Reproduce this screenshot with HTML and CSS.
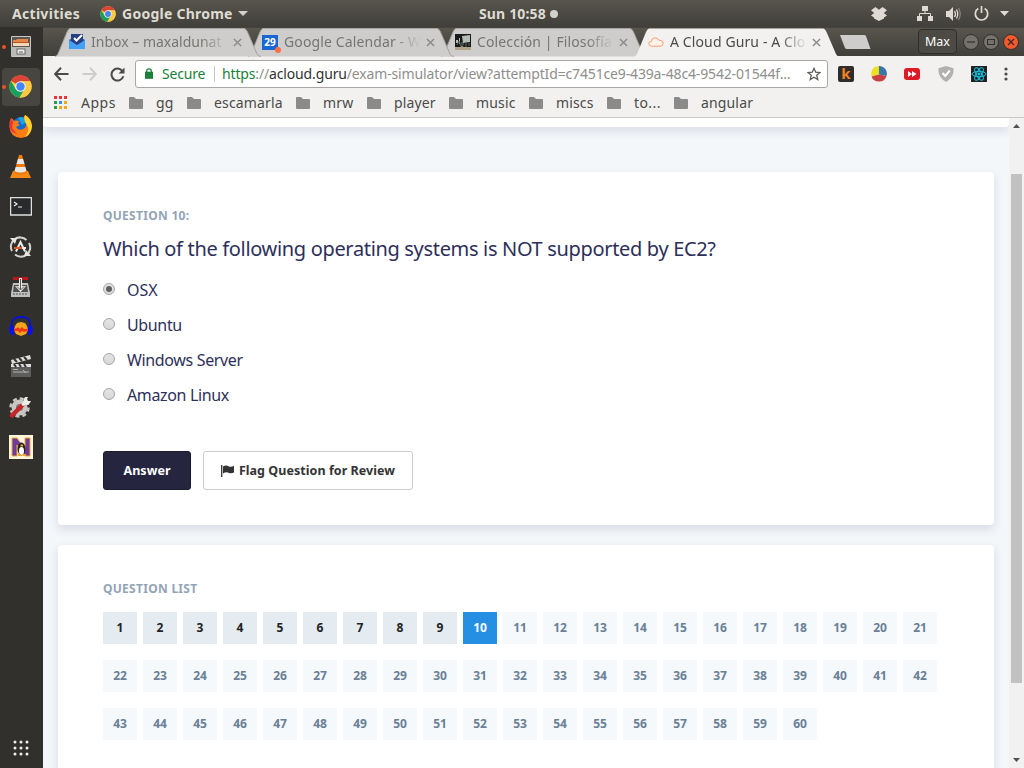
FILE: index.html
```html
<!DOCTYPE html>
<html lang="en">
<head>
<meta charset="utf-8">
<title>A Cloud Guru - Exam Simulator</title>
<link rel="stylesheet" href="styles.css">
</head>
<body>
<svg width="0" height="0" class="defs">
  <symbol id="chrome" viewBox="0 0 24 24">
    <circle cx="12" cy="12" r="11.5" fill="#fc4"/>
    <path d="M12 12 2 6A11.5 11.5 0 0 1 22.2 6.5H12Z" fill="#dc4437"/>
    <path d="M2 6.2A11.5 11.5 0 0 0 11 23.5L16.5 14.5 7 14.5Z" fill="#1a9f5b"/>
    <path d="M12 6.5H22.2A11.5 11.5 0 0 1 11 23.5L17 14Z" fill="#fdc943"/>
    <circle cx="12" cy="12" r="5.5" fill="#f3f3f3"/><circle cx="12" cy="12" r="4.4" fill="#4385f4"/>
  </symbol>
  <symbol id="folder" viewBox="0 0 14 12"><path d="M1 0H5L7 2H13Q14 2 14 3V11Q14 12 13 12H1Q0 12 0 11V1Q0 0 1 0Z" fill="#8a8a8a"/></symbol>
  <symbol id="close" viewBox="0 0 10 10"><path d="M1 1 9 9M9 1 1 9" stroke="#8b8987" stroke-width="1.5" fill="none"/></symbol>
  <symbol id="tab" viewBox="0 0 206 29"><path d="M0 28.5Q2 28 3 26L12 4Q13.500 .5 15 .5H189Q191 .5 192.500 4L202 26Q203 28 206 28.500" fill="#cfcdcb" stroke="#a5a3a0"/></symbol>
  <symbol id="tabOn" viewBox="0 0 206 29"><path d="M0 29Q2 28 3 26L12 4Q13.500 .5 15 .5H189Q191 .5 192.500 4L202 26Q203 28 205 29Z" fill="#f2f1f0"/></symbol>
</svg>

<header class="panel">
  <span class="activities">Activities</span>
  <svg class="app-logo" width="16" height="16"><use href="#chrome"/></svg>
  <span class="app-name">Google Chrome</span>
  <svg class="caret" width="10" height="5"><path d="M0 0H10L5 5Z" fill="#d3d1cb"/></svg>
  <span class="clock">Sun 10:58</span><i class="dot"></i>
  <div class="tray">
    <svg width="16" height="14" viewBox="0 0 16 14"><path d="M4.500 0 8 2.700 11.500 0 16 3.200 12.800 6 16 8.500 13 10.500V11.500L8 14 3 11.500V10.500L0 8.500 3.200 6 0 3.200Z" fill="#dfdbd2"/></svg>
    <svg class="net" width="16" height="15" viewBox="0 0 16 15"><path d="M5 0H11V5H5ZM0 10H5V15H0ZM11 10H16V15H11Z" fill="#dfdbd2"/><path d="M8 5V7.500M2.500 10V7.500H13.500V10" stroke="#dfdbd2" fill="none"/></svg>
    <svg class="vol" width="15" height="14" viewBox="0 0 15 14"><path d="M0 4H3L7 0V14L3 10H0Z" fill="#dfdbd2"/><path d="M8.500 4Q10.500 7 8.500 10M10.500 2.500Q13 7 10.500 11.500" stroke="#dfdbd2" stroke-width="1.300" fill="none"/><path d="M12.500 1Q16 7 12.500 13" stroke="#96948e" fill="none"/></svg>
    <svg class="power" width="15" height="15" viewBox="0 0 15 15"><path d="M4.300 2.500A6.200 6.200 0 1 0 10.700 2.500M7.500 0V7" stroke="#dfdbd2" stroke-width="1.700" fill="none"/></svg>
    <svg class="caret-end" width="9" height="5"><path d="M0 0H9L4.500 5Z" fill="#dfdbd2"/></svg>
  </div>
</header>

<div class="desktop">
  <nav class="dock">
    <span class="launcher running"><svg width="20" height="22" viewBox="0 0 20 22"><rect width="20" height="21" rx="1" fill="#c9c8c5"/><rect x="1" y="1" width="18" height="10" fill="#5a5752"/><path d="M2 4H5L6 3H17V6H2Z" fill="#e3874a"/><path d="M2 7H18V10H2Z" fill="#f3d7b8"/><path d="M2 6H18V7H2Z" fill="#b9521c"/><path d="M0 11H20V20H0Z" fill="#b9b9b7"/><rect x="6" y="13" width="8" height="5" fill="#eee" stroke="#666"/><path d="M8 16H12" stroke="#555"/></svg></span>
    <span class="launcher running current"><svg width="23" height="23"><use href="#chrome"/></svg></span>
    <span class="launcher"><svg width="23" height="23" viewBox="0 0 23 23"><circle cx="12" cy="11" r="9" fill="#126bd0"/><path d="M9 3Q13 1 15 3L17 7 13 10Z" fill="#18a5e8"/><path d="M2 3Q4 4 5 6Q7 5 10 6L9 9 11 10 7 12Q9 16 14 14Q18 13 17 8L15 3Q14 2 16 0Q23 4 23 12Q22 22 12 23Q1 22 .5 12Q0 7 2 3Z" fill="#ff7b16"/><path d="M16 0Q22 3 23 11Q22 20 16 22Q21 15 18 10Q14 5 16 0Z" fill="#ffd22f"/><path d="M2 3 4 7 3 13 8 19Q1 17 .5 11Z" fill="#f22d42"/></svg></span>
    <span class="launcher"><svg width="21" height="23" viewBox="0 0 21 23"><path d="M3 16H18L21 23H0Z" fill="#f58a16"/><path d="M9 0H12L17 18Q10.500 22 4 18Z" fill="#f17b0d"/><path d="M8 4H13L14.500 9H6.500ZM5.800 12H15.300L16.500 16Q10 19 4.500 16Z" fill="#e8e8e8"/></svg></span>
    <span class="launcher"><svg width="22" height="19" viewBox="0 0 22 19"><rect x=".5" y=".5" width="21" height="17.500" fill="#282a2b" stroke="#e0e0df" stroke-width="1.500"/><path d="M4 5 7 7 4 9M8 10H12" stroke="#eee" stroke-width="1.200" fill="none"/></svg></span>
    <span class="launcher"><svg width="23" height="22" viewBox="0 0 23 22"><g fill="none" stroke="#d4d3d0" stroke-width="2"><path d="M3 15A9.200 9.200 0 0 1 17.500 4M20 7A9.200 9.200 0 0 1 6 18.500"/></g><path d="M1 2 8 2 6 8ZM22 20H15L17 14Z" fill="#e5e4e1"/><path d="M7 15.500 11.500 6 16 15.500" stroke="#eee" stroke-width="2" fill="none"/><path d="M5 12H13" stroke="#e95420" stroke-width="2"/><path d="M13 12H17" stroke="#eee" stroke-width="2"/></svg></span>
    <span class="launcher"><svg width="21" height="22" viewBox="0 0 21 22"><path d="M3 7H18L20 17V21H1V17Z" fill="#bfc0bd"/><path d="M4 9H17L18 16H3Z" fill="#4f5151"/><path d="M3 1H18V4H3Z" fill="#b91722"/><path d="M9 2H12V10H16L10.500 16 5 10H9Z" fill="#eee"/><path d="M10.500 3V13M7 10.500 10.500 14 14 10.500" stroke="#555" fill="none"/><path d="M3 18H18" stroke="#555" stroke-dasharray="2 1"/></svg></span>
    <span class="launcher"><svg width="24" height="21" viewBox="0 0 24 21"><path d="M6 10 8 7 12 6 16 7 18 10 19 14 17 18 12 20 7 18 5 14Z" fill="#f0a51d"/><path d="M5 13 8 12 9 11 11 13 13 11 15 13H19V15L15 16 13 15 11 17 9 15H5Z" fill="#f43713"/><path d="M3 12Q1 1 12 1T21 12" stroke="#0712d8" stroke-width="1.800" fill="none"/><path d="M1 10Q4 8 5 11V19Q1 20 0 14ZM23 10Q20 8 19 11V19Q23 20 24 14Z" fill="#0712e8"/></svg></span>
    <span class="launcher"><svg width="22" height="23" viewBox="0 0 22 23"><path d="M1 5 20 0 21 4 2 9Z" fill="#dededb"/><path d="M4 4 7 7M9 3 12 6M14 2 17 5" stroke="#333" stroke-width="2"/><path d="M1 10H21V22H1Z" fill="#5d5e5c"/><path d="M1 9H21V12H1Z" fill="#ddd"/><path d="M4 9 6 12M9 9 11 12M14 9 16 12" stroke="#333" stroke-width="2"/><path d="M3 14.500H8M3 17H19M13 15 16 18" stroke="#c8c8c5" stroke-width=".8"/></svg></span>
    <span class="launcher"><svg width="23" height="22" viewBox="0 0 23 22"><circle cx="10.500" cy="11.500" r="8" fill="#c8c7c4"/><circle cx="10.500" cy="11.500" r="9" fill="none" stroke="#c8c7c4" stroke-width="2.500" stroke-dasharray="4 3.070"/><circle cx="10.500" cy="11.500" r="3.500" fill="#777"/><path d="M3 19.500 13 9.500" stroke="#c4262a" stroke-width="4.500" stroke-linecap="round"/><path d="M13 9 18 5" stroke="#eee" stroke-width="3"/><path d="M16 1Q13 5 16 8T22 5L19 5 18 3 19 1" fill="#ececea"/></svg></span>
    <span class="launcher"><svg width="24" height="24" viewBox="0 0 24 24"><path d="M0 0H24V24H0Z" fill="#fff4dc"/><path d="M3 3H8L16 14V3H21V21H16L8 10V21H3Z" fill="#72399c" stroke="#e5ac2d"/><ellipse cx="12.500" cy="14" rx="4" ry="6.500" fill="#222"/><ellipse cx="12.500" cy="16" rx="2.500" ry="4" fill="#fff"/><path d="M9 20H12M14 20H17M11.500 10.500H14" stroke="#f3a51c" stroke-width="2"/></svg></span>
    <span class="all-apps"><svg width="16" height="16" viewBox="0 0 16 16" fill="#f1f0ee"><circle cx="2" cy="2" r="1.500"/><circle cx="8" cy="2" r="1.500"/><circle cx="14" cy="2" r="1.500"/><circle cx="2" cy="8" r="1.500"/><circle cx="8" cy="8" r="1.500"/><circle cx="14" cy="8" r="1.500"/><circle cx="2" cy="14" r="1.500"/><circle cx="8" cy="14" r="1.500"/><circle cx="14" cy="14" r="1.500"/></svg></span>
  </nav>

  <div class="browser">
    <div class="tabstrip">
      <div class="tab t1"><svg class="shape"><use href="#tab"/></svg>
        <svg class="fav" width="16" height="16" viewBox="0 0 16 16"><path d="M0 6 8 1 16 6V15H0Z" fill="#1b62c9"/><path d="M2 0H14V9L8 12 2 9Z" fill="#263f82"/><path d="M5 4 7.500 6.500 13 1" stroke="#fff" stroke-width="2" fill="none"/><path d="M0 6 8 11 16 6V15H0Z" fill="#43a0f5"/></svg>
        <span class="title">Inbox – maxaldunat</span><svg class="x" width="9" height="9"><use href="#close"/></svg></div>
      <div class="tab t2"><svg class="shape"><use href="#tab"/></svg>
        <span class="fav cal">29</span>
        <span class="title">Google Calendar - W</span><svg class="x" width="9" height="9"><use href="#close"/></svg></div>
      <div class="tab t3"><svg class="shape"><use href="#tab"/></svg>
        <svg class="fav" width="16" height="16" viewBox="0 0 16 16"><path d="M0 0H16V16H0Z" fill="#171b19"/><path d="M7 2 15 1V8L8 9ZM1 6H3V9H1ZM4 4H5V10H4Z" fill="#b4bdb6"/><path d="M2 11 4 7 6 12M7 12V8L9 11M11 8V13M14 9V12" stroke="#5f6862" fill="none"/><path d="M0 13H5L7 12 9 13H16V16H0Z" fill="#b3a489"/></svg>
        <span class="title">Colección | Filosofía</span><svg class="x" width="9" height="9"><use href="#close"/></svg></div>
      <div class="tab t4 active"><svg class="shape"><use href="#tabOn"/></svg>
        <svg class="fav" width="16" height="10" viewBox="0 0 16 10"><path d="M3.500 9.200Q.7 9 .7 6.700T3.500 4.500Q3.500 1 7 .8 9.500.7 10.800 3 14.800 3 15.200 6.200 15 9 12.500 9.200Z" fill="#fff3ea" stroke="#ff9a70"/></svg>
        <span class="title">A Cloud Guru - A Clo</span><svg class="x" width="9" height="9"><use href="#close"/></svg></div>
      <svg class="newtab" width="34" height="17" viewBox="0 0 34 17"><path d="M2 1H26Q27.500 1 28 2L32.500 15H9Q7.500 15 7 14Z" fill="#cfcdcb"/></svg>
      <div class="winctl">
        <span class="profile">Max</span>
        <span class="wbtn"><svg width="8" height="8"><path d="M0 4H8" stroke="#33322e" stroke-width="1.200"/></svg></span>
        <span class="wbtn"><svg width="8" height="8"><path d="M.5 1.500H7.500V6.500H.5Z" stroke="#33322e" stroke-width="1.200" fill="none"/></svg></span>
        <span class="wbtn quit"><svg width="8" height="8"><path d="M1 1 7 7M7 1 1 7" stroke="#3c2820" stroke-width="1.300"/></svg></span>
      </div>
    </div>

    <div class="toolbar">
      <svg width="15" height="14" viewBox="0 0 15 14"><path d="M7 .8 1.200 7 7 13.200M1.500 7H14.500" fill="none" stroke="#4b4a48" stroke-width="2"/></svg>
      <svg class="fwd" width="15" height="14" viewBox="0 0 15 14"><path d="M8 .8 13.800 7 8 13.200M.5 7H13.500" fill="none" stroke="#cfcdcb" stroke-width="2"/></svg>
      <svg class="reload" width="15" height="15" viewBox="0 0 15 15"><path d="M12.500 4.200A6 6 0 1 0 13.300 9.200" fill="none" stroke="#4b4a48" stroke-width="2"/><path d="M14.500 .5V6.500H8.500Z" fill="#4b4a48"/></svg>
      <div class="omnibox">
        <svg width="8" height="11" viewBox="0 0 9 12"><path d="M0 4H9V12H0Z" fill="#1b8038"/><path d="M2 5V3Q2 .8 4.500.8T7 3V5" fill="none" stroke="#1b8038" stroke-width="1.500"/></svg>
        <span class="secure">Secure</span>
        <span class="url"><b>https</b>://<em>acloud.guru</em>/exam-simulator/view?attemptId=c7451ce9-439a-48c4-9542-01544f...</span>
        <svg class="star" width="14" height="14" viewBox="0 0 14 14"><path d="M7 1.300 8.700 5.200 13 5.500 9.700 8.300 10.800 12.500 7 10.200 3.200 12.500 4.300 8.300 1 5.500 5.300 5.200Z" fill="none" stroke="#5f5e5c" stroke-width="1.300"/></svg>
      </div>
      <div class="extensions">
        <span class="ext-k">k</span>
        <svg width="16" height="16" viewBox="0 0 16 16"><path d="M8 0V8.500L.6 10.500Q-1.500 1 8 0Z" fill="#efdf20"/><path d="M8 0A7.700 7.700 0 0 1 15.500 10L8 8.500Z" fill="#3776ab"/><path d="M8 8.500 15.500 10Q14 15.500 8 15.500 2 15.500.6 10.500Z" fill="#c84042"/></svg>
        <svg width="16" height="12" viewBox="0 0 16 12"><rect width="16" height="12" rx="3" fill="#de1a26"/><path d="M4 3 8 6 4 9ZM8 3 12.500 6 8 9Z" fill="#fff"/></svg>
        <svg width="16" height="16" viewBox="0 0 16 16"><path d="M8 0 15.500 2.200Q16.500 11 8 16-.5 11 .5 2.200Z" fill="#b1b1b1"/><path d="M4.500 7 7.200 10 11.800 4.500" stroke="#fff" stroke-width="2" fill="none"/></svg>
        <svg width="16" height="16" viewBox="0 0 16 16"><path d="M0 0H16V16H0Z" fill="#222"/><g stroke="#16c5e6" fill="none"><ellipse cx="8" cy="8" rx="7" ry="2.700"/><ellipse cx="8" cy="8" rx="7" ry="2.700" transform="rotate(60 8 8)"/><ellipse cx="8" cy="8" rx="7" ry="2.700" transform="rotate(120 8 8)"/></g><circle cx="8" cy="8" r="1.400" fill="#16c5e6"/></svg>
        <svg width="4" height="14" viewBox="0 0 4 14" fill="#4b4a48"><circle cx="2" cy="2" r="1.600"/><circle cx="2" cy="7" r="1.600"/><circle cx="2" cy="12" r="1.600"/></svg>
      </div>
    </div>

    <div class="bookmarks">
      <svg width="14" height="14" viewBox="0 0 14 14"><path d="M0 0H3V3H0ZM5 0H8V3H5ZM10 0H13V3H10Z" fill="#f02f3d"/><path d="M0 5H3V8H0ZM0 10H3V13H0Z" fill="#279b4c"/><path d="M5 5H8V8H5Z" fill="#4285f4"/><path d="M10 5H13V8H10ZM5 10H8V13H5ZM10 10H13V13H10Z" fill="#faa61a"/></svg>
      <span class="w-apps">Apps</span>
      <svg width="14" height="12"><use href="#folder"/></svg><span class="w-gg">gg</span>
      <svg width="14" height="12"><use href="#folder"/></svg><span class="w-escamarla">escamarla</span>
      <svg width="14" height="12"><use href="#folder"/></svg><span class="w-mrw">mrw</span>
      <svg width="14" height="12"><use href="#folder"/></svg><span class="w-player">player</span>
      <svg width="14" height="12"><use href="#folder"/></svg><span class="w-music">music</span>
      <svg width="14" height="12"><use href="#folder"/></svg><span class="w-miscs">miscs</span>
      <svg width="14" height="12"><use href="#folder"/></svg><span class="w-to">to...</span>
      <svg width="14" height="12"><use href="#folder"/></svg><span class="w-angular">angular</span>
    </div>

    <div class="viewport">
      <main class="page">
        <div class="banner"></div>
        <section class="card question">
          <h4 class="label">QUESTION 10:</h4>
          <h2 class="prompt">Which of the following operating systems is NOT supported by EC2?</h2>
          <ul class="options">
            <li><i class="radio on"></i><span class="short">OSX</span></li>
            <li><i class="radio"></i><span>Ubuntu</span></li>
            <li><i class="radio"></i><span>Windows Server</span></li>
            <li><i class="radio"></i><span>Amazon Linux</span></li>
          </ul>
          <div class="actions">
            <button class="btn primary">Answer</button>
            <button class="btn"><svg width="13" height="12" viewBox="0 0 13 12"><path d="M.7 0V12" stroke="#333" stroke-width="1.300"/><path d="M2 1.500Q5-.2 7.500 1.200T13 .8V7.500Q10 9 7.500 7.700T2 8.500Z" fill="#333"/></svg><span class="flag">Flag Question for Review</span></button>
          </div>
        </section>
        <section class="card list">
          <h4 class="label">QUESTION LIST</h4>
          <div class="grid">
            <a class="done">1</a><a class="done">2</a><a class="done">3</a><a class="done">4</a><a class="done">5</a><a class="done">6</a><a class="done">7</a><a class="done">8</a><a class="done">9</a><a class="now">10</a>
            <a>11</a><a>12</a><a>13</a><a>14</a><a>15</a><a>16</a><a>17</a><a>18</a><a>19</a><a>20</a>
            <a>21</a><a>22</a><a>23</a><a>24</a><a>25</a><a>26</a><a>27</a><a>28</a><a>29</a><a>30</a>
            <a>31</a><a>32</a><a>33</a><a>34</a><a>35</a><a>36</a><a>37</a><a>38</a><a>39</a><a>40</a>
            <a>41</a><a>42</a><a>43</a><a>44</a><a>45</a><a>46</a><a>47</a><a>48</a><a>49</a><a>50</a>
            <a>51</a><a>52</a><a>53</a><a>54</a><a>55</a><a>56</a><a>57</a><a>58</a><a>59</a><a>60</a>
          </div>
        </section>
      </main>
      <div class="scrollbar">
        <svg width="7" height="4"><path d="M0 4H7L3.500 0Z" fill="#505050"/></svg>
        <div class="thumb"></div>
        <svg width="7" height="4"><path d="M0 0H7L3.500 4Z" fill="#505050"/></svg>
      </div>
    </div>
  </div>
</div>
</body>
</html>
```

FILE: styles.css
```css
* { box-sizing: border-box; }
body { margin: 0; width: 1024px; height: 768px; overflow: hidden; display: flex; flex-direction: column; font-family: "Noto Sans", "Open Sans", sans-serif; background: #32302c; }
.defs { position: absolute; }
svg { display: block; flex: none; }

.panel { height: 27px; flex: none; display: flex; align-items: center; padding: 0 12px; color: #dfdbd2; font-weight: 700; font-size: 14px; white-space: nowrap; background: linear-gradient(#57554c, #403f3a); }
.activities { width: 88px; letter-spacing: .3px; }
.app-logo { margin-right: 6px; }
.app-name { width: 111px; letter-spacing: .25px; }
.caret { margin-left: 5px; }
.clock { margin-left: 231px; width: 68px; letter-spacing: .15px; }
.dot { width: 8px; height: 8px; margin-left: 3px; border-radius: 50%; background: #d3d1cb; }
.tray { margin-left: auto; display: flex; align-items: center; margin-right: 3px; }
.net { margin-left: 30px; }
.vol { margin-left: 13px; }
.power { margin-left: 13px; }
.caret-end { margin-left: 11px; }

.desktop { flex: 1; display: flex; min-height: 0; }
.dock { width: 43px; background: #32302c; display: flex; flex-direction: column; align-items: center; padding: 1px 1px 12px 0; }
.launcher { width: 38px; height: 38px; margin-bottom: 2px; padding: 0 1px 1px 0; display: flex; align-items: center; justify-content: center; position: relative; }
.current { background: #484641; border-radius: 4px; }
.running::before { content: ""; position: absolute; left: 0; top: 17px; width: 4px; height: 4px; border-radius: 50%; background: #e95420; }
.all-apps { margin-top: auto; }

.browser { flex: 1; display: flex; flex-direction: column; min-width: 0; background: #f2f1f0; }
.tabstrip { height: 29px; flex: none; display: flex; align-items: flex-start; padding: 0 5px 0 12px; background: linear-gradient(#57554c, #403f3a); border-top: 1px solid #45433d; }
.tab { width: 206px; height: 28px; flex: none; margin-right: -13px; padding: 0 18px 0 14px; display: flex; align-items: center; position: relative; isolation: isolate; font-size: 14px; color: #777573; }
.shape { position: absolute; left: 0; top: 0; width: 206px; height: 29px; z-index: -1; }
.t1 { z-index: 3; } .t2 { z-index: 2; } .t3 { z-index: 1; }
.active { z-index: 4; color: #4b4a48; }
.fav { width: 16px; flex: none; }
.title { margin-left: 6px; width: 137px; flex: none; white-space: nowrap; line-height: 26px; letter-spacing: .12px; -webkit-mask-image: linear-gradient(90deg, #000 80%, transparent); mask-image: linear-gradient(90deg, #000 80%, transparent); }
.t1 .title { letter-spacing: 0; }
.x { margin-left: 5px; }
.cal { height: 15px; background: #1967d2; color: #fff; font: 700 10px/15px "Noto Sans", sans-serif; text-align: center; position: relative; }
.cal::after { content: ""; position: absolute; right: -3px; bottom: -3px; width: 6px; height: 6px; border-radius: 50%; background: #ff6d42; }
.newtab { margin: 6px 0 0 11px; }
.winctl { margin-left: auto; display: flex; align-items: center; gap: 4px; padding-top: 1px; }
.profile { width: 39px; height: 25px; margin-right: 2px; border: 1px solid #2f2e2a; border-radius: 4px; background: #4c4a44; color: #fff; font-size: 12.500px; line-height: 24px; text-align: center; }
.wbtn { width: 16px; height: 16px; border-radius: 50%; background: #74726b; border: 1px solid #33322e; display: flex; align-items: center; justify-content: center; }
.quit { background: #f25a2d; }

.toolbar { height: 36px; flex: none; display: flex; align-items: center; padding: 0 16px 0 11px; }
.fwd { margin-left: 13px; }
.reload { margin-left: 13px; }
.omnibox { width: 693px; height: 28px; margin-left: 10px; border: 1px solid #a9a7a5; border-radius: 3px; background: #fff; display: flex; align-items: center; padding: 0 6px 1px 9px; font-size: 14px; color: #8f8e8c; white-space: nowrap; }
.secure { margin-left: 9px; width: 53px; border-right: 1px solid #c5c4c2; line-height: 16px; color: #1b8038; letter-spacing: -.2px; }
.url { margin-left: 7px; width: 571px; letter-spacing: -.15px; }
.url b { font-weight: 400; color: #1b8038; }
.url em { font-style: normal; color: #333; }
.star { margin-left: auto; }
.extensions { flex: 1; margin-left: 10px; display: flex; align-items: center; justify-content: space-between; }
.ext-k { width: 16px; height: 16px; border-radius: 2px; background: #2f2d2c; color: #f5821f; font: 700 15px/15px "Noto Sans", sans-serif; text-align: center; }

.bookmarks { height: 26px; flex: none; display: flex; align-items: center; gap: 13px; padding: 0 0 4px 11px; border-bottom: 1px solid #cbc9c7; font-size: 14px; line-height: 20px; color: #4b4a48; white-space: nowrap; letter-spacing: .15px; }
.w-apps { width: 35px; letter-spacing: .5px; } .w-gg { width: 18px; } .w-escamarla { width: 69px; } .w-mrw { width: 31px; } .w-player { width: 42px; }
.w-music { width: 40px; } .w-miscs { width: 38px; } .w-to { width: 27px; letter-spacing: .4px; } .w-angular { width: 53px; }

.viewport { flex: 1; display: flex; min-height: 0; }
.page { width: 966px; overflow: hidden; background: #f3f7fa; color: #2d2f5b; }
.banner { height: 9px; background: #fff; border-radius: 0 0 4px 4px; box-shadow: 0 4px 10px rgba(40, 40, 80, .13); }
.card { width: 936px; margin: 0 15px 20px; background: #fff; border-radius: 4px; box-shadow: 0 4px 10px rgba(40, 40, 80, .13); padding: 36px 45px 0; }
.question { margin-top: 45px; height: 353px; }
.list { height: 300px; }
.label { margin: 0; font-size: 12px; line-height: 16px; color: #94a4b6; letter-spacing: .28px; }
.prompt { margin: 12px 0 0; font-size: 20px; font-weight: 400; line-height: 26px; white-space: nowrap; letter-spacing: -.33px; }
.options { list-style: none; margin: 10px 0 0; padding: 0; font-size: 16px; letter-spacing: -.35px; }
.options .short { letter-spacing: 0; }
.options li { height: 35px; display: flex; align-items: center; gap: 12px; }
.radio { width: 12px; height: 12px; margin-top: -1px; border: 1px solid #a6a6a6; border-radius: 50%; background: linear-gradient(#e4e4e4, #d8d8d8); display: flex; align-items: center; justify-content: center; }
.on::after { content: ""; width: 6px; height: 6px; border-radius: 50%; background: #606060; }
.actions { display: flex; gap: 12px; margin-top: 39px; }
.btn { height: 39px; width: 210px; padding: 0; border: 1px solid #ccc; border-radius: 3px; background: #fff; color: #333; font: 700 12.500px "Noto Sans", sans-serif; letter-spacing: .05px; display: flex; align-items: center; justify-content: center; gap: 5px; white-space: nowrap; }
.primary { width: 88px; background: #25253f; border-color: #1b1b30; color: #fff; }
.grid { display: grid; grid-template-columns: repeat(21, 34px); column-gap: 6px; row-gap: 16px; margin-top: 15px; }
.grid a { height: 32px; background: #f5f9fc; color: #6a8096; font-size: 12px; font-weight: 700; line-height: 31px; text-align: center; }
.grid .done { background: #e4ecf2; color: #222; }
.grid .now { background: #258fe4; color: #fff; }

.scrollbar { width: 15px; background: #f1f1f1; display: flex; flex-direction: column; align-items: center; padding: 6px 0 6px; }
.thumb { width: 11px; height: 509px; margin: 46px 0 auto; background: #c1c1c1; }
```
